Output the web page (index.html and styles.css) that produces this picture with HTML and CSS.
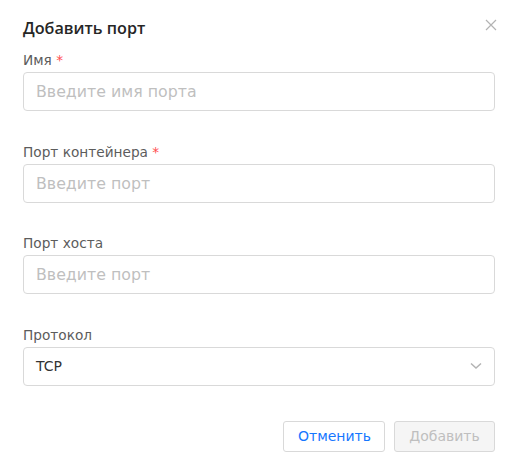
FILE: index.html
```html
<!DOCTYPE html>
<html lang="ru">
<head>
<meta charset="utf-8">
<link rel="stylesheet" href="styles.css">
</head>
<body>
<div class="modal">
  <div class="header">
    <h1 class="title">Добавить порт</h1>
    <button class="close" aria-label="Закрыть">
      <svg width="12" height="12" viewBox="0 0 12 12"><path d="M1 1L11 11M11 1L1 11" stroke="#b3b3b3" stroke-width="1.2" fill="none"/></svg>
    </button>
  </div>
  <div class="item">
    <label class="label">Имя <span class="req">*</span></label>
    <input class="input" placeholder="Введите имя порта">
  </div>
  <div class="item">
    <label class="label">Порт контейнера <span class="req">*</span></label>
    <input class="input" placeholder="Введите порт">
  </div>
  <div class="item">
    <label class="label">Порт хоста</label>
    <input class="input" placeholder="Введите порт">
  </div>
  <div class="item last">
    <label class="label">Протокол</label>
    <div class="select">
      <span>TCP</span>
      <svg width="12" height="8" viewBox="0 0 12 8"><path d="M1 1.5L6 6L11 1.5" stroke="#b3b3b3" stroke-width="1.5" fill="none"/></svg>
    </div>
  </div>
  <div class="footer">
    <button class="btn cancel">Отменить</button>
    <button class="btn add" disabled>Добавить</button>
  </div>
</div>
</body>
</html>
```
FILE: styles.css
```css
* { box-sizing: border-box; }
html, body { margin: 0; background: #fff; }
body { font-family: "DejaVu Sans", sans-serif; }
.modal { width: 516px; height: 468px; padding: 16px 21px 0 23px; }
.header { display: flex; justify-content: space-between; align-items: center; height: 24px; margin-bottom: 10px; }
.title { margin: 0; font-family: "Open Sans", sans-serif; font-size: 16.2px; font-weight: 600; color: #262626; line-height: 24px; }
.close { background: none; border: 0; padding: 0; margin-right: -2px; margin-top: -6px; display: flex; }
.item { margin-bottom: 30.67px; }
.item.last { margin-bottom: 35px; }
.label { display: block; height: 20px; line-height: 20px; margin-bottom: 2px; font-size: 13.7px; color: #5c5c5c; }
.req { color: #ff4d4f; }
.input, .select { display: flex; align-items: center; width: 100%; height: 39px; border: 1px solid #d9d9d9; border-radius: 4px; padding: 0 12px; font-family: inherit; font-size: 15.8px; color: #262626; background: #fff; outline: none; }
.input::placeholder { color: #bfbfbf; }
.select { justify-content: space-between; font-size: 14px; color: #333; padding-right: 12px; }
.footer { display: flex; justify-content: flex-end; gap: 9px; }
.btn { height: 31px; border-radius: 3px; border: 1px solid #d9d9d9; font-family: inherit; font-size: 14px; padding: 0 14px; }
.cancel { width: 102px; background: #fff; color: #1677ff; }
.add { width: 101px; background: #f5f5f5; color: #bfbfbf; }
```
